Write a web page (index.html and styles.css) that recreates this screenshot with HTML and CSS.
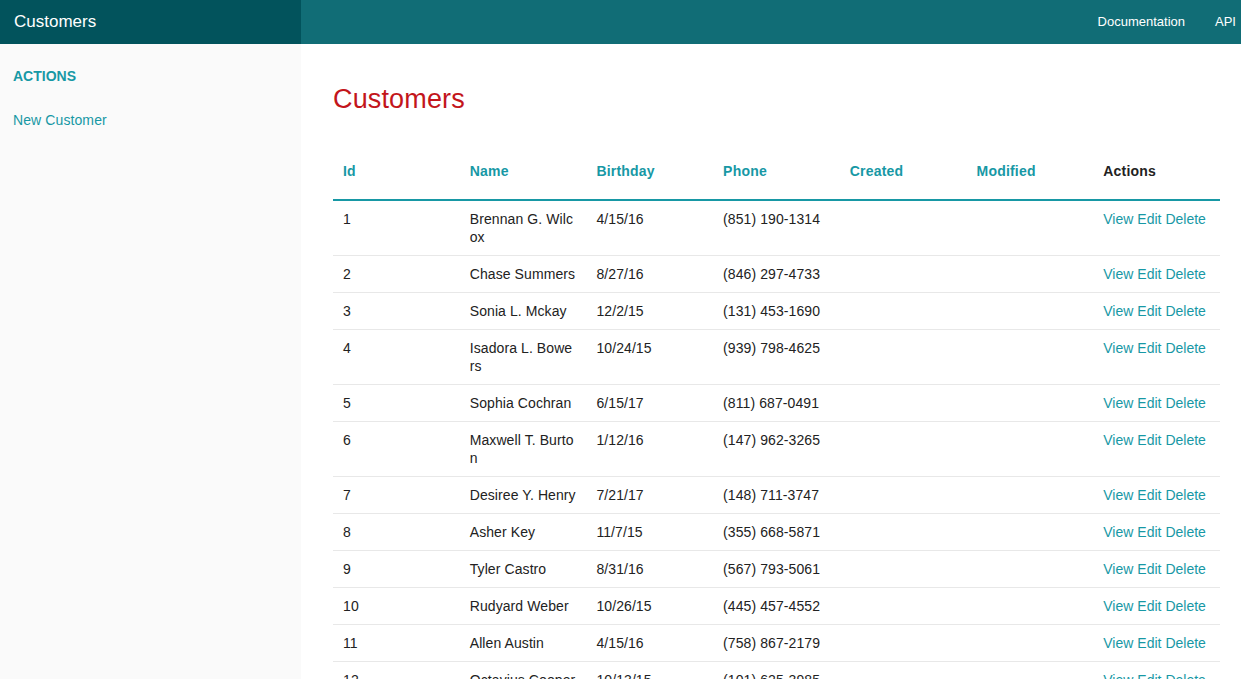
FILE: index.html
```html
<!DOCTYPE html>
<html>
<head>
<meta charset="utf-8">
<title>Customers</title>
<link rel="stylesheet" href="styles.css">
</head>
<body>
<nav class="top-bar">
  <div class="title-area"><a class="brand" href="#">Customers</a></div>
  <ul class="top-links">
    <li><a href="#">Documentation</a></li>
    <li><a href="#">API</a></li>
  </ul>
</nav>
<div class="main">
  <aside class="sidebar">
    <h4 class="side-heading">ACTIONS</h4>
    <ul class="side-nav">
      <li><a href="#">New Customer</a></li>
    </ul>
  </aside>
  <section class="content">
    <h3 class="page-title">Customers</h3>
    <table class="grid">
      <thead>
        <tr>
          <th><a href="#">Id</a></th>
          <th><a href="#">Name</a></th>
          <th><a href="#">Birthday</a></th>
          <th><a href="#">Phone</a></th>
          <th><a href="#">Created</a></th>
          <th><a href="#">Modified</a></th>
          <th class="actions">Actions</th>
        </tr>
      </thead>
      <tbody>
        <tr><td>1</td><td>Brennan G. Wilcox</td><td>4/15/16</td><td>(851) 190-1314</td><td></td><td></td><td><a href="#">View</a> <a href="#">Edit</a> <a href="#">Delete</a></td></tr>
        <tr><td>2</td><td>Chase Summers</td><td>8/27/16</td><td>(846) 297-4733</td><td></td><td></td><td><a href="#">View</a> <a href="#">Edit</a> <a href="#">Delete</a></td></tr>
        <tr><td>3</td><td>Sonia L. Mckay</td><td>12/2/15</td><td>(131) 453-1690</td><td></td><td></td><td><a href="#">View</a> <a href="#">Edit</a> <a href="#">Delete</a></td></tr>
        <tr><td>4</td><td>Isadora L. Bowers</td><td>10/24/15</td><td>(939) 798-4625</td><td></td><td></td><td><a href="#">View</a> <a href="#">Edit</a> <a href="#">Delete</a></td></tr>
        <tr><td>5</td><td>Sophia Cochran</td><td>6/15/17</td><td>(811) 687-0491</td><td></td><td></td><td><a href="#">View</a> <a href="#">Edit</a> <a href="#">Delete</a></td></tr>
        <tr><td>6</td><td>Maxwell T. Burton</td><td>1/12/16</td><td>(147) 962-3265</td><td></td><td></td><td><a href="#">View</a> <a href="#">Edit</a> <a href="#">Delete</a></td></tr>
        <tr><td>7</td><td>Desiree Y. Henry</td><td>7/21/17</td><td>(148) 711-3747</td><td></td><td></td><td><a href="#">View</a> <a href="#">Edit</a> <a href="#">Delete</a></td></tr>
        <tr><td>8</td><td>Asher Key</td><td>11/7/15</td><td>(355) 668-5871</td><td></td><td></td><td><a href="#">View</a> <a href="#">Edit</a> <a href="#">Delete</a></td></tr>
        <tr><td>9</td><td>Tyler Castro</td><td>8/31/16</td><td>(567) 793-5061</td><td></td><td></td><td><a href="#">View</a> <a href="#">Edit</a> <a href="#">Delete</a></td></tr>
        <tr><td>10</td><td>Rudyard Weber</td><td>10/26/15</td><td>(445) 457-4552</td><td></td><td></td><td><a href="#">View</a> <a href="#">Edit</a> <a href="#">Delete</a></td></tr>
        <tr><td>11</td><td>Allen Austin</td><td>4/15/16</td><td>(758) 867-2179</td><td></td><td></td><td><a href="#">View</a> <a href="#">Edit</a> <a href="#">Delete</a></td></tr>
        <tr><td>12</td><td>Octavius Cooper</td><td>10/13/15</td><td>(101) 625-3985</td><td></td><td></td><td><a href="#">View</a> <a href="#">Edit</a> <a href="#">Delete</a></td></tr>
      </tbody>
    </table>
  </section>
</div>
</body>
</html>
```
FILE: styles.css
```css
html, body {
  margin: 0;
  padding: 0;
  height: 100%;
  overflow: hidden;
}
body {
  font-family: "Liberation Sans", Arial, Helvetica, sans-serif;
  color: #222;
  background: #fff;
}
a {
  color: #1798a5;
  text-decoration: none;
}
ul {
  list-style: none;
  margin: 0;
  padding: 0;
}

.top-bar {
  display: flex;
  height: 44px;
  background: #116d76;
}
.title-area {
  width: 301px;
  background: #02535c;
  display: flex;
  align-items: center;
  padding-left: 14px;
  box-sizing: border-box;
}
.brand {
  color: #fff;
  font-size: 17px;
}
.top-links {
  margin-left: auto;
  display: flex;
  align-items: center;
  gap: 30px;
  margin-right: 5px;
  padding-bottom: 2px;
}
.top-links a {
  color: #fff;
  font-size: 13px;
}

.main {
  display: flex;
  min-height: calc(100% - 44px);
}
.sidebar {
  width: 301px;
  flex-shrink: 0;
  background: #fafafa;
  padding: 23px 13px 0;
  box-sizing: border-box;
}
.side-heading {
  margin: 0;
  color: #1798a5;
  font-size: 14px;
  font-weight: bold;
  line-height: 18px;
}
.side-nav {
  margin-top: 26px;
}
.side-nav a {
  font-size: 14px;
  line-height: 18px;
  letter-spacing: 0.1px;
}

.content {
  flex: 1;
  padding: 0 21px 0 32px;
}
.page-title {
  margin: 38px 0 0;
  color: #c3151b;
  font-size: 27px;
  font-weight: normal;
  line-height: 34px;
  letter-spacing: 0.15px;
}
.grid {
  width: 100%;
  table-layout: fixed;
  border-collapse: collapse;
  margin-top: 26px;
  font-size: 14px;
}
.grid thead {
  border-bottom: 2px solid #1798a5;
}
.grid th {
  text-align: left;
  font-weight: bold;
  padding: 20px 10px 19px;
  line-height: 18px;
  letter-spacing: 0.2px;
}
.grid th.actions {
  color: #222;
}
.grid td {
  padding: 9px 10px;
  line-height: 18px;
  vertical-align: top;
  word-break: break-all;
  letter-spacing: 0.09px;
  border-bottom: 1px solid #e8e8e8;
}
.grid td a {
  letter-spacing: 0;
}
```
